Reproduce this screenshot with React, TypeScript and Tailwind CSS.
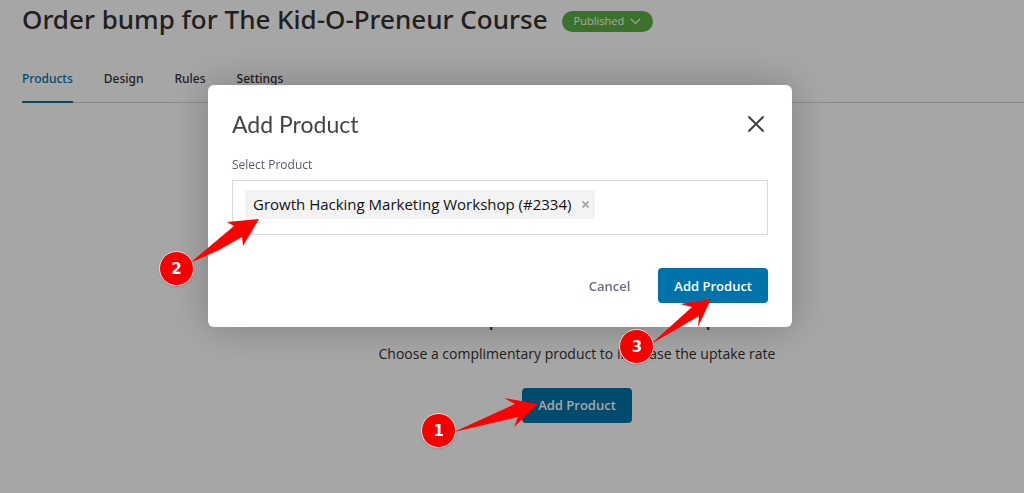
import React, { useState } from "react";

const tabs = ["Products", "Design", "Rules", "Settings"];

// Numbered step marker: the arrow points are relative to the top left of the badge
const StepMarker = ({
  step,
  points,
  className,
}: {
  step: number;
  points: string;
  className: string;
}) => (
  <div className={`absolute z-50 h-[35px] w-[35px] pointer-events-none ${className}`}>
    <svg className="absolute inset-0 overflow-visible" width="35" height="35" aria-hidden="true">
      <polygon points={points} fill="#fe0000" />
    </svg>
    <span className="relative flex h-full w-full items-center justify-center rounded-full border border-[#e8dede] bg-[#f60000] pt-0.5 font-['DejaVu_Sans'] text-[15px] leading-none font-bold text-white shadow-sm">
      {step}
    </span>
  </div>
);

const AddProductModal = () => {
  const [query, setQuery] = useState("");

  return (
    <div className="fixed inset-0 z-40 flex items-start justify-center bg-black/35 pt-[85px] pr-6">
      <div
        role="dialog"
        aria-modal="true"
        aria-labelledby="modal-title"
        className="w-full max-w-[584px] rounded-md bg-white px-6 pt-[23px] pb-6 shadow-[0_0_40px_rgba(0,0,0,0.25)]"
      >
        <div className="flex items-center justify-between">
          <h2 id="modal-title" className="font-['Lato'] text-[23px] leading-8 text-[#444]">
            Add Product
          </h2>
          <button type="button" aria-label="Close" className="flex h-6 w-6 items-center justify-center">
            <svg width="16" height="16" viewBox="0 0 16 16" fill="none" stroke="#3c3a3c" strokeWidth="1.8" strokeLinecap="round">
              <path d="M1 1l14 14M15 1L1 15" />
            </svg>
          </button>
        </div>

        <label htmlFor="product-search" className="mt-[13px] block text-xs leading-6 text-[#565b68]">
          Select Product
        </label>

        <div className="relative mt-[3px] flex h-[55px] items-start border border-[#d9d9d9] px-3 pt-[9px]">
          <div className="flex h-[29px] items-center rounded-sm bg-[#f3f3f3] pr-1 pl-2">
            <span className="text-[15px] whitespace-nowrap text-[#111]">Growth Hacking Marketing Workshop (#2334)</span>
            <button type="button" aria-label="Remove product" className="ml-2 flex h-4 w-3 items-center justify-center">
              <svg width="7" height="7" viewBox="0 0 7 7" stroke="#a5a5a5" strokeWidth="1.8">
                <path d="M.5.5l6 6M6.5.5l-6 6" />
              </svg>
            </button>
          </div>
          <input
            id="product-search"
            type="text"
            value={query}
            onChange={(e) => setQuery(e.target.value)}
            className="h-[29px] min-w-0 flex-1 px-2 text-[15px] outline-none"
          />
          <StepMarker
            step={2}
            className="top-[70px] left-[-74px]"
            points="31,12 50,-4 75,-25 68,-29 100,-32 84,-5 83,-14 60,-1"
          />
        </div>

        <div className="mt-[33px] flex items-center justify-end gap-7">
          <button type="button" className="pt-0.5 text-[13px] font-semibold text-[#6a6a85]">
            Cancel
          </button>
          <div className="relative">
            <button type="button" className="h-[35px] rounded-sm bg-[#0073aa] px-4 pt-0.5 text-[13px] font-semibold text-white">
              Add Product
            </button>
            <StepMarker
              step={3}
              className="top-[61px] left-[-39px]"
              points="32,15 73,-22 61,-25 92,-30 79,-2 80,-13"
            />
          </div>
        </div>
      </div>
    </div>
  );
};

const App = () => {
  const [activeTab, setActiveTab] = useState("Products");

  return (
    <div className="min-h-screen overflow-x-hidden bg-white font-['Open_Sans',sans-serif] text-[#353030]">
      <header className="flex items-center gap-3.5 pt-px pl-[22px]">
        <h1 className="font-['Noto_Sans'] text-[26px] leading-9 font-medium whitespace-nowrap">
          Order bump for The Kid-O-Preneur Course
        </h1>
        <button
          type="button"
          className="mt-1 flex h-[21px] items-center gap-1.5 rounded-full bg-[#59b042] px-3 text-[11px] text-white"
        >
          Published
          <svg width="11" height="7" viewBox="0 0 11 7" fill="none" stroke="white" strokeWidth="1.1">
            <path d="M1 1l4.5 4.5L10 1" />
          </svg>
        </button>
      </header>

      <nav className="mt-[28px] ml-[22px] flex gap-[31px] border-b border-[#d5d5e2]">
        {tabs.map((tab) => (
          <button
            key={tab}
            type="button"
            onClick={() => setActiveTab(tab)}
            className={`-mb-px h-[38px] border-b-2 pb-2 font-['Noto_Sans'] text-xs font-medium ${
              activeTab === tab ? "border-[#0073aa] text-[#0073aa]" : "border-transparent"
            }`}
          >
            {tab}
          </button>
        ))}
      </nav>

      {/* Empty state */}
      <main className="flex flex-col items-center pt-[203px] pl-[130px] text-center">
        <h3 className="text-[17px] leading-7 font-semibold">Add a product to this Order Bump</h3>
        <p className="mt-2 text-sm leading-6">Choose a complimentary product to increase the uptake rate</p>
        <div className="relative mt-[22px]">
          <button type="button" className="h-[35px] rounded-sm bg-[#0073aa] px-4 text-[13px] font-semibold text-white">
            Add Product
          </button>
          <StepMarker
            step={1}
            className="top-[25px] left-[-101px]"
            points="33,19 94,-9 83,-15 117,-9 93,14 97,4"
          />
        </div>
      </main>

      <AddProductModal />
    </div>
  );
};

export default App;
